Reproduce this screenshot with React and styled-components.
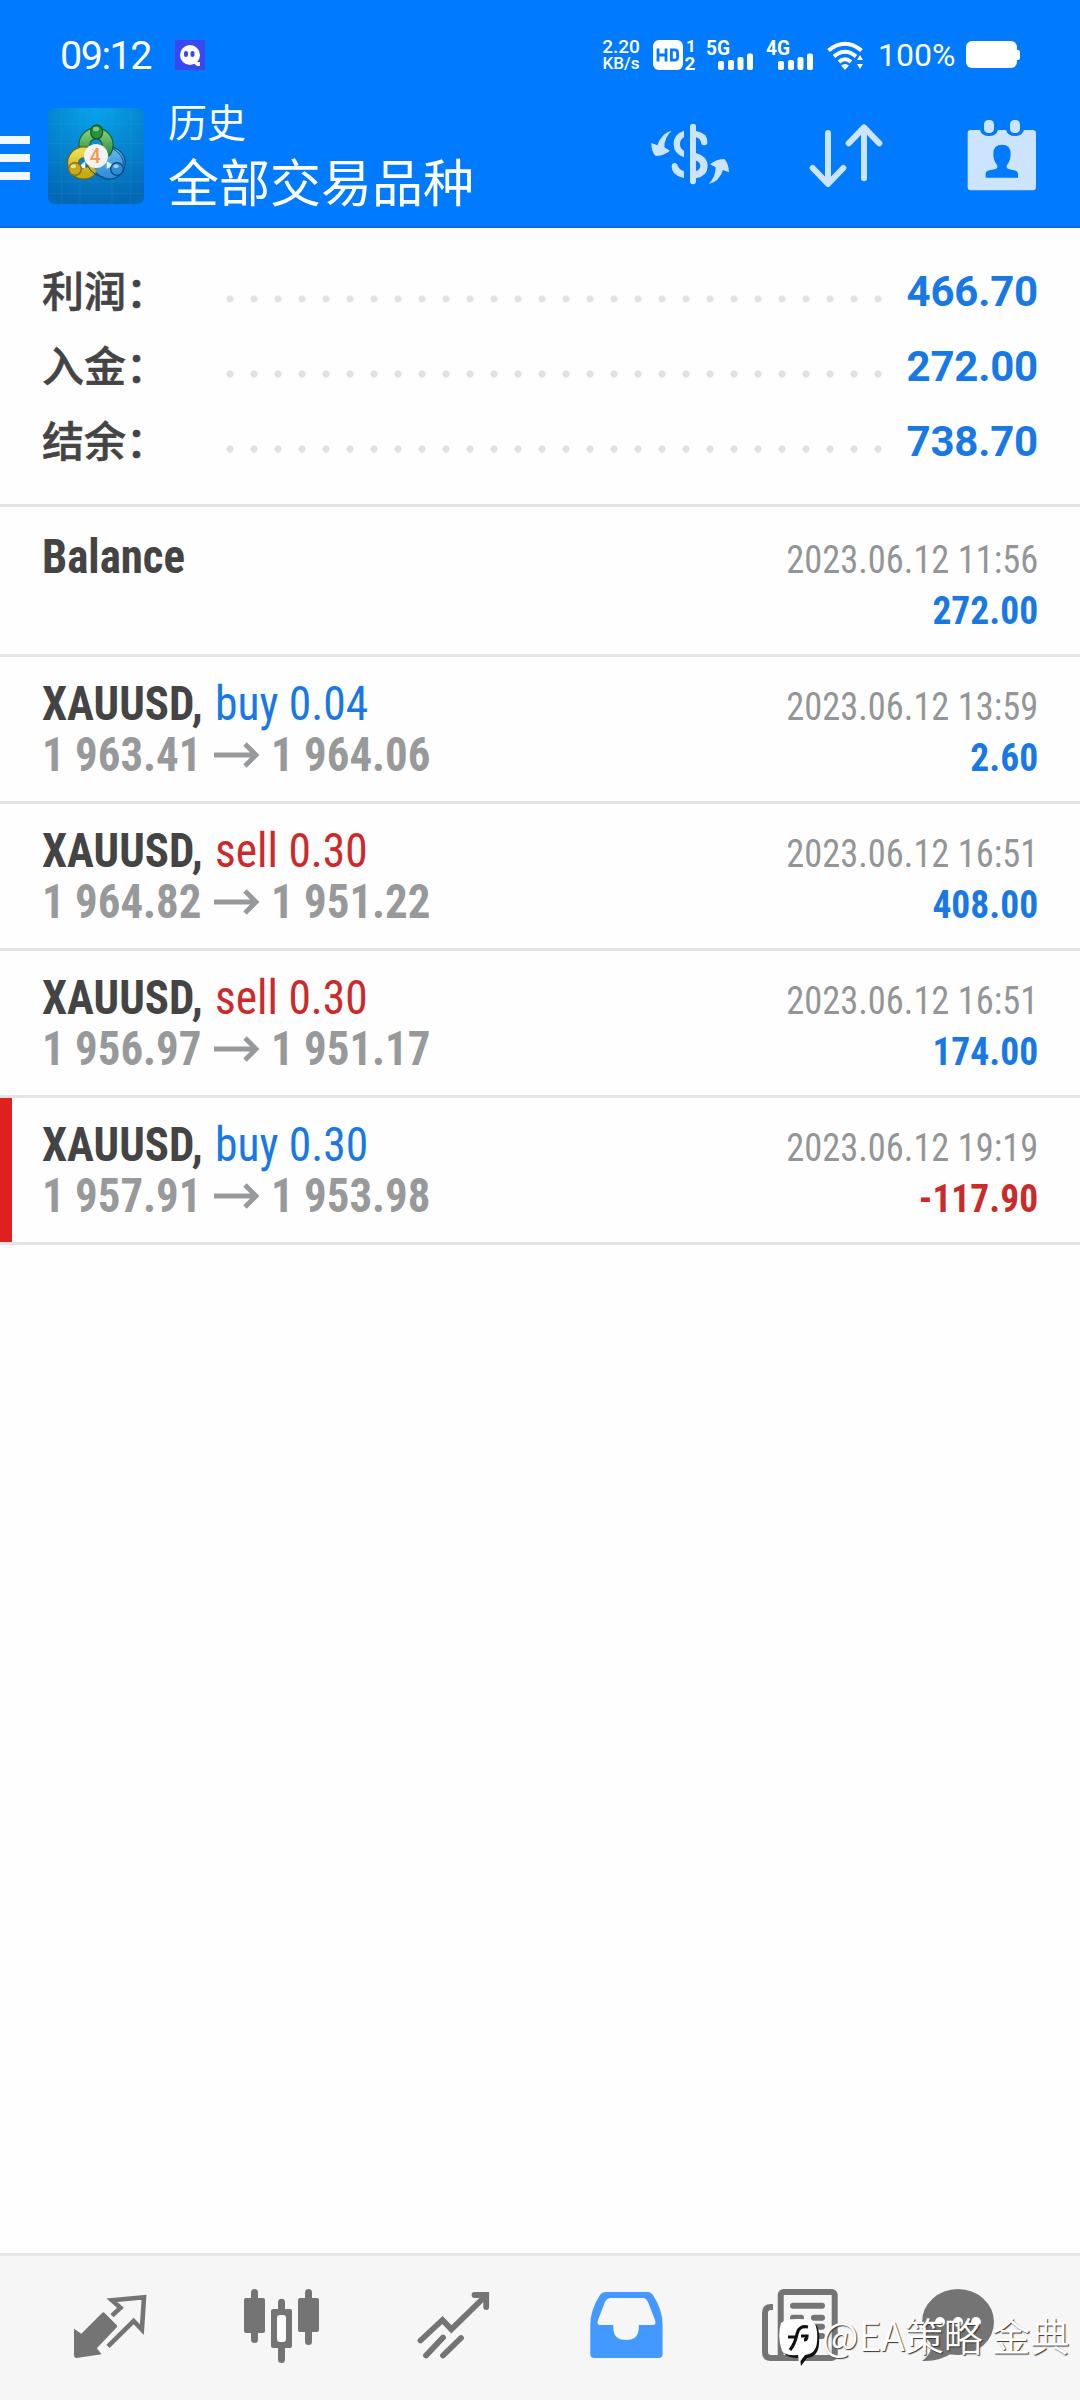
import React from 'react';
import styled, {createGlobalStyle} from 'styled-components';

const GlobalStyle = createGlobalStyle`
* {
  box-sizing: border-box;
}
body {
  margin: 0;
  background-color: #fefefe;
}
`
const Page = styled.div`
position: relative;
display: flex;
flex-direction: column;
width: 1080px;
height: 2400px;
overflow: hidden;
background-color: #fefefe;
font-family: Roboto, "Noto Sans CJK SC", sans-serif;
`
const Header = styled.header`
height: 228px;
background-color: #007aff;
border-bottom: 2px solid #1368cf;
color: #fff;
`
const StatusBar = styled.div`
display: flex;
align-items: center;
height: 108px;
padding: 2px 60px 0 60px;
`
const Clock = styled.span`
width: 115px;
font-size: 39.5px;
font-weight: 450;
letter-spacing: -1.5px;
line-height: 48px;
margin-top: 2px;
`
const StatusRight = styled.div`
display: flex;
align-items: center;
margin-left: auto;
`
const Speed = styled.div`
display: flex;
flex-direction: column;
align-items: center;
width: 40px;
margin-right: 12px;
font-weight: 500;
span {
  font-size: 19px;
  line-height: 16px;
}
span + span {
  font-size: 17px;
}
`
const StatusIcon = styled.svg`
display: block;
width: ${p => p.$w}px;
height: 30px;
margin-right: ${p => p.$gap}px;
overflow: visible;
fill: #fff;
font-family: Roboto, sans-serif;
font-weight: 700;
`
const Percent = styled.span`
width: 88px;
font-size: 32px;
font-weight: 400;
line-height: 40px;
`
const Toolbar = styled.div`
display: flex;
height: 118px;
padding-right: 38px;
`
const Menu = styled.div`
display: flex;
flex-direction: column;
gap: 10px;
width: 30px;
padding-top: 28px;
margin-right: 18px;
span {
  height: 8px;
  background-color: #f2f8ff;
}
`
const AppLogo = styled.svg`
width: 96px;
height: 96px;
margin-right: 24px;
`
const Titles = styled.div`
display: flex;
flex-direction: column;
`
const Caption = styled.div`
margin-top: -8px;
font-size: 39px;
line-height: 48px;
`
const Title = styled.div`
font-size: 51px;
line-height: 66px;
margin-top: 4px;
`
const Actions = styled.div`
display: flex;
gap: 76px;
margin: 9px 0 0 auto;
svg {
  width: 80px;
  height: 80px;
  fill: #cce4ff;
  stroke-linecap: round;
  stroke-linejoin: round;
}
`
const Summary = styled.section`
height: 279px;
padding: 25px 42px 0;
border-bottom: 3px solid #e4e4e4;
`
const SummaryRow = styled.div`
display: flex;
align-items: center;
height: 75px;
`
const Label = styled.span`
width: 176px;
font: 500 42px/60px "Noto Sans CJK SC", sans-serif;
-webkit-text-stroke: 0.6px #444;
color: #444;
padding-bottom: 4px;
`
const Dots = styled.div`
width: 672px;
height: 9px;
margin-top: 17px;
background: radial-gradient(circle at 12px 4px, #e2e2e2 3.2px, transparent 4px) 0 0 / 24px 9px repeat-x;
`
const Total = styled.span`
margin: 2px 0 0 auto;
font-size: 42px;
font-weight: 700;
line-height: 60px;
letter-spacing: -0.2px;
color: #1778e6;
`
const Deal = styled.div`
display: flex;
justify-content: space-between;
height: ${p => p.$first ? 150 : 147}px;
padding: ${p => p.$first ? 24 : 21}px 42px 0 ${p => p.$marked ? 30 : 42}px;
border-bottom: 3px solid #e4e4e4;
`
const MarkedDeal = styled.div`
display: grid;
grid-template-columns: 12px 1fr;
background: linear-gradient(#e01f1f, #e01f1f) 0 0 / 12px 144px no-repeat;
border-bottom: 3px solid #e4e4e4;
height: 147px;
${Deal} {
  grid-column: 2;
  border-bottom: 0;
}
`
const DealInfo = styled.div`
font-size: 48px;
line-height: 51px;
font-stretch: 75%;
white-space: pre;
`
const DealTitle = styled.div`
display: grid;
grid-template-columns: 172.5px auto;
`
const Symbol = styled.span`
font-weight: 700;
color: #444;
transform: scaleX(0.935);
transform-origin: left;
`
const Order = styled.span`
color: ${p => p.$side === 'sell' ? '#cc2a2a' : '#1778e6'};
transform: scaleX(0.948);
transform-origin: left;
`
const Prices = styled.div`
display: grid;
grid-template-columns: 171.5px 57px auto;
align-items: center;
font-weight: 700;
color: #97999a;
svg {
  width: 46px;
  height: 28px;
}
`
const Price = styled.span`
transform: scaleX(0.935);
transform-origin: left;
`
const DealResult = styled.div`
padding-top: 3px;
font-size: 39.5px;
line-height: 51px;
font-stretch: 75%;
text-align: right;
white-space: nowrap;
`
const Time = styled.div`
color: #939596;
transform: scaleX(0.922);
transform-origin: right;
`
const Amount = styled.div`
font-weight: 700;
color: ${p => p.$loss ? '#c92b2b' : '#1778e6'};
transform: scaleX(0.95);
transform-origin: right;
`
const NavBar = styled.nav`
display: flex;
align-items: center;
height: 147px;
margin-top: auto;
padding: 0 24px;
background-color: #f6f6f6;
border-top: 3px solid #e6e6e6;
`
const NavItem = styled.div`
display: flex;
justify-content: center;
width: 172px;
color: ${p => p.$active ? '#4399ff' : '#747474'};
svg {
  width: 96px;
  height: 96px;
  overflow: visible;
}
`
const Watermark = styled.div`
position: absolute;
left: 778px;
top: 2316px;
display: flex;
align-items: center;
font: 350 39px/48px "Noto Sans CJK SC", sans-serif;
color: #fff;
text-shadow: 1px 1px 1px #333;
white-space: pre;
svg {
  width: 44px;
  height: 52px;
}
span {
  margin-top: -16px;
}
`

const totals = [
    {label: '利润：', value: '466.70'},
    {label: '入金：', value: '272.00'},
    {label: '结余：', value: '738.70'},
]

const deals = [
    {id: 1, symbol: 'Balance', time: '2023.06.12 11:56', amount: '272.00'},
    {id: 2, symbol: 'XAUUSD,', side: 'buy', lot: '0.04', open: '1 963.41', close: '1 964.06', time: '2023.06.12 13:59', amount: '2.60'},
    {id: 3, symbol: 'XAUUSD,', side: 'sell', lot: '0.30', open: '1 964.82', close: '1 951.22', time: '2023.06.12 16:51', amount: '408.00'},
    {id: 4, symbol: 'XAUUSD,', side: 'sell', lot: '0.30', open: '1 956.97', close: '1 951.17', time: '2023.06.12 16:51', amount: '174.00'},
    {id: 5, symbol: 'XAUUSD,', side: 'buy', lot: '0.30', open: '1 957.91', close: '1 953.98', time: '2023.06.12 19:19', amount: '-117.90', marked: true},
]

const Signal = ({name}) => (
    <StatusIcon $w={48} $gap={name === '5G' ? 12 : 13} viewBox="0 0 48 30">
        <text x="0" y="15" fontSize="21" textLength="24" lengthAdjust="spacingAndGlyphs">{name}</text>
        <rect x="12" y="21" width="6" height="9" rx="2"/>
        <rect x="22" y="20" width="6" height="10" rx="2"/>
        <rect x="31.5" y="17" width="6" height="13" rx="2"/>
        <rect x="41" y="13.5" width="6" height="16.5" rx="2"/>
    </StatusIcon>
)

const Status = () => (
    <StatusBar>
        <Clock>09:12</Clock>
        <StatusIcon $w={30} $gap={0} viewBox="0 0 30 30">
            <rect width="30" height="30" rx="1" fill="#3a48f0"/>
            <circle cx="15" cy="15" r="10"/>
            <path d="M17 22h8v4h-3z"/>
            <rect x="9" y="11" width="4" height="6" rx="2" fill="#3a48f0"/>
            <rect x="15.5" y="11" width="4" height="6" rx="2" fill="#3a48f0"/>
        </StatusIcon>
        <StatusRight>
            <Speed><span>2.20</span><span>KB/s</span></Speed>
            <StatusIcon $w={42} $gap={11} viewBox="0 0 42 30">
                <rect width="30" height="30" rx="6"/>
                <g fill="none" stroke="#007aff" strokeWidth="2.8">
                    <path d="M5 8.500v13M13 8.500v13M5 15h8M18.400 9.800h3.200q3 0 3 3v4.400q0 3-3 3h-3.200z"/>
                </g>
                <text x="33" y="12" fontSize="17">1</text>
                <text x="31.5" y="29.500" fontSize="19">2</text>
            </StatusIcon>
            <Signal name="5G"/>
            <Signal name="4G"/>
            <StatusIcon $w={37} $gap={14} viewBox="0 0 37 30">
                <g fill="none" stroke="#fff" strokeWidth="4">
                    <path d="M1.500 10.500Q18 -3 34.500 10.500"/>
                    <path d="M7 16.500Q18 7 29 16.500"/>
                    <path d="M12 22Q18 16.500 24 22"/>
                </g>
                <path d="M18 30l-4-4.500q4-3 8 0zM30 20l3-5 3 5zM30 24h6l-3 5z"/>
            </StatusIcon>
            <Percent>100%</Percent>
            <StatusIcon $w={54} $gap={0} viewBox="0 0 54 30">
                <rect y="1" width="51" height="27" rx="6"/>
                <rect x="49" y="10" width="5" height="10" rx="2"/>
            </StatusIcon>
        </StatusRight>
    </StatusBar>
)

const Logo = () => (
    <AppLogo viewBox="144 264 288 288">
        <defs>
            <radialGradient id="sky" cx="0.5" cy="0" r="1">
                <stop offset="0" stopColor="#08a4ec"/>
                <stop offset="1" stopColor="#0468b4"/>
            </radialGradient>
            <linearGradient id="green" x2="0" y2="1"><stop stopColor="#7fc971"/><stop offset="1" stopColor="#23863a"/></linearGradient>
            <linearGradient id="gold" x2="0" y2="1"><stop stopColor="#eadb4e"/><stop offset="1" stopColor="#c4aa14"/></linearGradient>
            <linearGradient id="blue" x2="0" y2="1"><stop stopColor="#5cb3ea"/><stop offset="1" stopColor="#2f8cd6"/></linearGradient>
        </defs>
        <rect x="144" y="264" width="288" height="288" rx="20" fill="url(#sky)"/>
        <path d="M144 312h288M144 370h288M144 428h288M144 484h288M144 520h288M184 264v288M240 264v288M336 264v288M392 264v288" stroke="#3fb2ea" strokeOpacity="0.22" strokeWidth="2"/>
        <g fill="none">
            <circle cx="327" cy="429" r="32" stroke="#0c4880" strokeWidth="36"/>
            <circle cx="327" cy="429" r="32" stroke="url(#blue)" strokeWidth="29"/>
            <circle cx="288" cy="375" r="35" stroke="#145f2b" strokeWidth="36"/>
            <circle cx="288" cy="375" r="35" stroke="url(#green)" strokeWidth="29"/>
            <circle cx="251" cy="429" r="32" stroke="#6d6410" strokeWidth="36"/>
            <circle cx="251" cy="429" r="32" stroke="url(#gold)" strokeWidth="29"/>
            <path d="M336 384q36 20 34 52M262 437q20 36 62 34" stroke="#0c4880" strokeWidth="3"/>
            <path d="M309 400l58 30q-4 42-44 43-34-3-44-38z" fill="url(#blue)"/>
        </g>
        <path d="M236 440l20-16v22zM320 424l22 12-22 10z" fill="#e8f3ee"/>
        <ellipse cx="290" cy="336" rx="18" ry="21" fill="#27913c" stroke="#145f2b" strokeWidth="4"/>
        <circle cx="225" cy="447" r="19" fill="#c9aa1d" stroke="#81701a" strokeWidth="4"/>
        <circle cx="351" cy="447" r="19" fill="#2f8cd4" stroke="#0c4880" strokeWidth="4"/>
        <ellipse cx="288" cy="327" rx="9" ry="7" fill="#a6e29a" opacity="0.7"/>
        <ellipse cx="220" cy="439" rx="8" ry="6" fill="#f9efa0" opacity="0.8"/>
        <ellipse cx="348" cy="439" rx="8" ry="6" fill="#b5dcf8" opacity="0.8"/>
        <circle cx="288" cy="408" r="36" fill="#f3f1f3"/>
        <text x="286" y="428" fontSize="58" fontWeight="500" textAnchor="middle" fill="#f29a45" fontFamily="Roboto">4</text>
    </AppLogo>
)

const TopActions = () => (
    <Actions>
        <svg viewBox="210 351 240 240">
            <path d="M339 380v164" stroke="#cce4ff" strokeWidth="18"/>
            <path d="M312 392v20q-12 6-12 20t12 20v20q-31-10-31-40t31-40z"/>
            <path d="M348 393q34 6 34 32a9 9 0 0 1-19 2q-2-12-15-15z"/>
            <path fillRule="evenodd" d="M348 459q35 10 35 39 0 30-35 37zM348 482v31q13-5 13-16t-13-15z"/>
            <path d="M275 497a9 9 0 0 1 17-3q4 14 20 20v20q-37-8-37-37z"/>
            <path d="M275 392q-30 6-43 44l-18-7q0 26 13 39 23 0 43-16l-17-10q0-30 22-50z"/>
            <path d="M386 552q31-6 43-42l18 7q-1-28-14-40-23 0-43 16l17 9q0 30-21 50z"/>
        </svg>
        <svg viewBox="678 351 240 240">
            <g fill="none" stroke="#cce4ff" strokeWidth="18">
                <path d="M744 399v150M698 504l46 48 46-48"/>
                <path d="M852 535V386M806 430l46-48 46 48"/>
            </g>
        </svg>
        <svg viewBox="1146 351 240 240">
            <path fillRule="evenodd" d="M1173 390h27q5 18 27 18t27-18h24q5 18 27 18t27-18h26q10 0 10 10v161q0 10-10 10h-185q-10 0-10-10V400q0-10 10-10zM1217 533h97v-12q0-8-12-10l-17-4q-8-4-4-12 11-14 11-34 0-27-26-27t-26 27q0 20 11 34 4 8-4 12l-18 4q-12 2-12 10z"/>
            <rect x="1212" y="360" width="30" height="39" rx="13"/>
            <rect x="1290" y="360" width="30" height="39" rx="13"/>
        </svg>
    </Actions>
)

const DealRow = ({deal, first}) => (
    <Deal $first={first} $marked={deal.marked}>
        <DealInfo>
            <DealTitle>
                <Symbol>{deal.symbol}</Symbol>
                {deal.side && <Order $side={deal.side}>{deal.side} {deal.lot}</Order>}
            </DealTitle>
            {deal.open && <Prices>
                <Price>{deal.open}</Price>
                <svg viewBox="0 0 46 28">
                    <path d="M0 14h42M31 3l11 11-11 11" fill="none" stroke="#97999a" strokeWidth="4.8"/>
                </svg>
                <Price>{deal.close}</Price>
            </Prices>}
        </DealInfo>
        <DealResult>
            <Time>{deal.time}</Time>
            <Amount $loss={deal.amount.startsWith('-')}>{deal.amount}</Amount>
        </DealResult>
    </Deal>
)

const BottomNav = () => (
    <NavBar>
        <NavItem>
            <svg viewBox="0 0 96 96" fill="currentColor">
                <path d="M12 48.700l7.300 5L40 33q1.300-1.300 2.600 0l12 12q1.400 1.300 0 2.600L34.800 68.300l4.800 6L14.400 78Q12 78 12 75.600z"/>
                <path d="M50 35.600l8.500-7.900-8.500-7.400 32-3-2.100 32.400-8.300-8.700L46 66.300" fill="none" stroke="currentColor" strokeWidth="4.6"/>
            </svg>
        </NavItem>
        <NavItem>
            <svg viewBox="0 0 96 96" fill="currentColor">
                <rect x="10" y="18" width="21" height="35" rx="2"/>
                <rect x="17" y="9" width="7" height="54" rx="3.5"/>
                <rect x="64" y="18" width="21" height="34" rx="2"/>
                <rect x="71" y="9" width="7" height="56" rx="3.5"/>
                <rect x="44" y="18.7" width="7" height="64.3" rx="3.5"/>
                <rect x="37" y="29" width="21" height="39" rx="2"/>
                <rect x="43" y="35" width="9" height="27" rx="3" fill="#fcfcfc"/>
            </svg>
        </NavItem>
        <NavItem>
            <svg viewBox="0 0 96 96" fill="none" stroke="currentColor" strokeWidth="5.8" strokeLinecap="round">
                <path d="M14.500 60.500l22-20.500 8.900 9.300L80 15.500M68.500 15h11.700v12"/>
                <path d="M20 75.500l17-18M37 75.500l18-17.500"/>
            </svg>
        </NavItem>
        <NavItem $active>
            <svg viewBox="0 0 96 96" fill="currentColor">
                <path fillRule="evenodd" d="M28 12h42q3 0 5 3 9.600 15 9.600 30v29q0 4-4 4H16.300q-4 0-4-4V45Q12.300 30 22 15q2-3 6-3zM33 18q-4 0-6 4l-7 18q-1.500 5 2 5h13.300v2.500q0 12.500 12.700 12.500t12.800-12.500V45H75q3.500 0 2-5l-7-18q-2-4-5-4z"/>
            </svg>
        </NavItem>
        <NavItem>
            <svg viewBox="0 0 96 96" fill="none" stroke="currentColor" strokeWidth="6">
                <path d="M23 27h-2q-6 0-6 6v39q0 6 6 6"/>
                <rect x="30.7" y="12" width="54" height="66" rx="3"/>
                <path d="M20 78h62"/>
                <path d="M43 25.700h29M43 37.700h8M64 37.700h8M64 46.700h8M43 46.700h8M43 56h29" strokeLinecap="round"/>
            </svg>
        </NavItem>
        <NavItem>
            <svg viewBox="0 0 96 96" fill="currentColor">
                <ellipse cx="36" cy="42" rx="36" ry="33"/>
                <path d="M8 62q4 10-8 19 17 1 32-9z"/>
                <g fill="#fff"><circle cx="18" cy="42" r="5"/><circle cx="36" cy="42" r="5"/><circle cx="54" cy="42" r="5"/></g>
            </svg>
        </NavItem>
    </NavBar>
)

const App = () => {
    return (
        <Page>
            <GlobalStyle/>
            <Header>
                <Status/>
                <Toolbar>
                    <Menu><span/><span/><span/></Menu>
                    <Logo/>
                    <Titles>
                        <Caption>历史</Caption>
                        <Title>全部交易品种</Title>
                    </Titles>
                    <TopActions/>
                </Toolbar>
            </Header>
            <Summary>
                {totals.map(v =>
                    <SummaryRow key={v.label}>
                        <Label>{v.label}</Label>
                        <Dots/>
                        <Total>{v.value}</Total>
                    </SummaryRow>)}
            </Summary>
            {deals.map((v, i) => v.marked
                ? <MarkedDeal key={v.id}><DealRow deal={v}/></MarkedDeal>
                : <DealRow key={v.id} deal={v} first={i === 0}/>)}
            <BottomNav/>
            <Watermark>
                <svg viewBox="0 0 44 52">
                    <path d="M5 9Q9 5 22 5t17 5q3 6 2 18-1 13-12 14l-6 8-1-8Q9 42 6 37 1 23 5 9z" fill="#111"/>
                    <path d="M3 7Q7 3 20 3t17 5q3 6 2 18-1 12-12 13l-6 8-1-8Q7 40 4 35-1 21 3 7z" fill="#fff"/>
                    <path d="M30 11q-9-2-11 7-2 10-7 16M10 21h9M23 20h6q0 4-3 4" fill="none" stroke="#111" strokeWidth="3.2"/>
                </svg>
                <span>@EA策略 金典</span>
            </Watermark>
        </Page>
    );
};
export default App;
